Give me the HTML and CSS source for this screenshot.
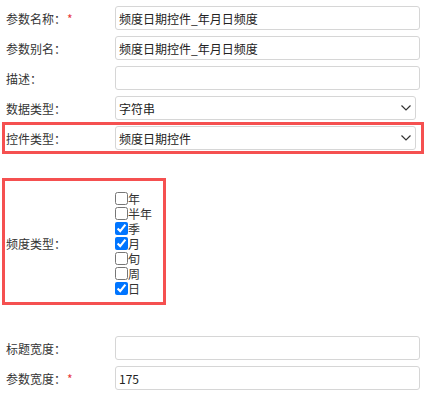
FILE: index.html
```html
<!DOCTYPE html>
<html lang="zh-CN">
<head>
<meta charset="utf-8">
<title>参数设置</title>
<link rel="stylesheet" href="styles.css">
</head>
<body>

<div class="form">
  <div class="row">
    <label class="label">参数名称：<span class="req">*</span></label>
    <input class="field" type="text" value="频度日期控件_年月日频度">
  </div>
  <div class="row">
    <label class="label">参数别名：</label>
    <input class="field" type="text" value="频度日期控件_年月日频度">
  </div>
  <div class="row">
    <label class="label">描述：</label>
    <input class="field" type="text" value="">
  </div>
  <div class="row">
    <label class="label">数据类型：</label>
    <div class="field select">
      <span>字符串</span>
      <svg class="arrow" width="10" height="6" viewBox="0 0 10 6"><path d="M0.5 0.5 L5 5 L9.5 0.5" fill="none" stroke="#333" stroke-width="1.2"/></svg>
    </div>
  </div>
  <div class="row mark ctl">
    <label class="label">控件类型：</label>
    <div class="field select">
      <span>频度日期控件</span>
      <svg class="arrow" width="10" height="6" viewBox="0 0 10 6"><path d="M0.5 0.5 L5 5 L9.5 0.5" fill="none" stroke="#333" stroke-width="1.2"/></svg>
    </div>
  </div>

  <div class="freq mark">
    <label class="label">频度类型：</label>
    <div class="checks">
      <label class="check"><input type="checkbox">年</label>
      <label class="check"><input type="checkbox">半年</label>
      <label class="check"><input type="checkbox" checked>季</label>
      <label class="check"><input type="checkbox" checked>月</label>
      <label class="check"><input type="checkbox">旬</label>
      <label class="check"><input type="checkbox">周</label>
      <label class="check"><input type="checkbox" checked>日</label>
    </div>
  </div>

  <div class="row">
    <label class="label">标题宽度：</label>
    <input class="field" type="text" value="">
  </div>
  <div class="row">
    <label class="label">参数宽度：<span class="req">*</span></label>
    <input class="field" type="text" value="175">
  </div>
</div>

</body>
</html>
```

FILE: styles.css
```css
* {
  box-sizing: border-box;
}

body {
  margin: 0;
  background: #fff;
  color: #333;
  font-family: "Noto Sans CJK SC", "Liberation Sans", sans-serif;
  font-size: 12px;
}

.form {
  width: 420px;
  padding: 6px 0 0 6px;
}

/* one label + field per line */
.row {
  display: flex;
  align-items: center;
  height: 24px;
  margin-bottom: 6px;
}

.label {
  width: 109px;
  flex: none;
  white-space: nowrap;
}

.req {
  color: #e8383d;
  margin-left: 1px;
}

.field {
  flex: 1;
  min-width: 0;
  height: 24px;
  padding: 0 3px;
  border: 1px solid #d6d6d6;
  border-radius: 3px;
  background: #fff;
  color: #222;
  font-family: inherit;
  font-size: 12px;
  outline: none;
}

.select {
  display: flex;
  align-items: center;
  justify-content: space-between;
  margin-right: 4px;
  padding-right: 4px;
}

.arrow {
  flex: none;
}

/* red highlight boxes */
.mark {
  outline: 3px solid #f55050;
  outline-offset: 1px;
}

.ctl {
  margin-bottom: 32px;
}

.freq {
  display: flex;
  align-items: center;
  width: 156px;
  padding: 9px 0 5px;
  margin-bottom: 35px;
}

.checks {
  display: flex;
  flex-direction: column;
}

.check {
  display: flex;
  align-items: center;
  height: 15px;
  line-height: 15px;
}

.check input {
  width: 13px;
  height: 13px;
  margin: 0;
}
```
